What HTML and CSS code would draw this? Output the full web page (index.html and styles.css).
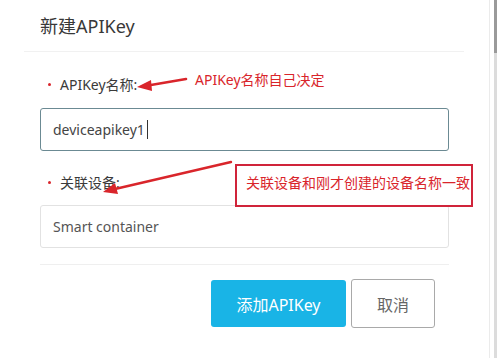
FILE: index.html
```html
<!DOCTYPE html>
<html lang="zh-CN">
<head>
<meta charset="utf-8">
<title>新建APIKey</title>
<link rel="stylesheet" href="styles.css">
</head>
<body>
<div class="page">
  <div class="modal">
    <div class="header"><h1 class="title">新建APIKey</h1></div>
    <div class="body">
      <div class="field">
        <label class="label"><span class="dot"></span>APIKey名称:</label>
        <div class="input focused">deviceapikey1<span class="caret"></span></div>
      </div>
      <div class="field second">
        <label class="label"><span class="dot"></span>关联设备:</label>
        <div class="input">Smart container</div>
      </div>
      <div class="footer">
        <button class="btn primary">添加APIKey</button>
        <button class="btn default">取消</button>
      </div>
    </div>
  </div>
  <div class="scrollbar"><div class="thumb"></div></div>

  <svg class="arrows" width="497" height="358" viewBox="0 0 497 358">
    <line x1="186" y1="79" x2="148" y2="85.5" stroke="#d9252b" stroke-width="2.6" stroke-linecap="round"/>
    <polygon points="137,87 151,80 152,91" fill="#d9252b"/>
    <line x1="231" y1="162" x2="115" y2="189" stroke="#d9252b" stroke-width="2.4" stroke-linecap="round"/>
    <polygon points="103,192 115,183 118,194" fill="#d9252b"/>
  </svg>
  <div class="note note-1">APIKey名称自己决定</div>
  <div class="note note-box">关联设备和刚才创建的设备名称一致</div>
</div>
</body>
</html>
```
FILE: styles.css
```css
html, body {
  margin: 0;
  padding: 0;
  background: #fff;
}
body {
  font-family: "Noto Sans", "Noto Sans CJK SC", sans-serif;
  color: #333;
  width: 497px;
  height: 358px;
  overflow: hidden;
}
.page {
  position: relative;
  display: flex;
  width: 497px;
  height: 358px;
}
.modal {
  width: 489px;
  border-right: 1px solid #ebebeb;
  flex: none;
}
.header {
  height: 51px;
  margin: 0 25px 0 24px;
  border-bottom: 1px solid #f1f1f1;
  display: flex;
  align-items: center;
}
.title {
  margin: 0 0 2px 16px;
  font-size: 18px;
  font-weight: normal;
  color: #383838;
}
.body {
  padding: 0 40px;
}
.field {
  margin-top: 22px;
}
.field.second {
  margin-top: 21px;
}
.label {
  display: flex;
  align-items: center;
  height: 20px;
  font-size: 14px;
  color: #3a3a3a;
  padding-left: 8px;
  margin-bottom: 14px;
}
.second .label {
  margin-bottom: 13px;
}
.dot {
  width: 3px;
  height: 3px;
  border-radius: 50%;
  background: #d9252b;
  margin-right: 9px;
}
.input {
  box-sizing: border-box;
  height: 43px;
  border: 1px solid #e2e2e2;
  border-radius: 3px;
  padding: 0 12px;
  display: flex;
  align-items: center;
  font-size: 14px;
  color: #555;
}
.input.focused {
  border-color: #6b8a93;
  color: #444;
}
.caret {
  display: inline-block;
  width: 1px;
  height: 19px;
  background: #333;
  margin-left: 2px;
}
.footer {
  margin-top: 16px;
  border-top: 1px solid #efefef;
  padding-top: 14px;
  display: flex;
  justify-content: flex-end;
  align-items: flex-start;
  gap: 5px;
  padding-right: 14px;
}
.btn {
  font-family: "Noto Sans", "Noto Sans CJK SC", sans-serif;
  font-size: 16px;
  border-radius: 3px;
  cursor: pointer;
}
.primary {
  margin-top: 1px;
  width: 135px;
  height: 47px;
  background: #19b4e6;
  color: #fff;
  border: none;
}
.default {
  width: 84px;
  height: 49px;
  background: #fff;
  color: #666;
  border: 1px solid #a9a9a9;
}
.scrollbar {
  margin-left: 4px;
  width: 3px;
  background: #dcdcdc;
}
.thumb {
  height: 53px;
  background: #9a9a9a;
}
.arrows {
  position: absolute;
  left: 0;
  top: 0;
  pointer-events: none;
}
.note {
  position: absolute;
  color: #d9252b;
  font-size: 14px;
  line-height: 20px;
  white-space: nowrap;
}
.note-1 {
  left: 195px;
  top: 70px;
}
.note-box {
  left: 235px;
  top: 164px;
  width: 238px;
  height: 43px;
  box-sizing: border-box;
  border: 2px solid #d0243a;
  padding: 7px 0 0 9px;
  background: #fff;
  overflow: visible;
}
```
